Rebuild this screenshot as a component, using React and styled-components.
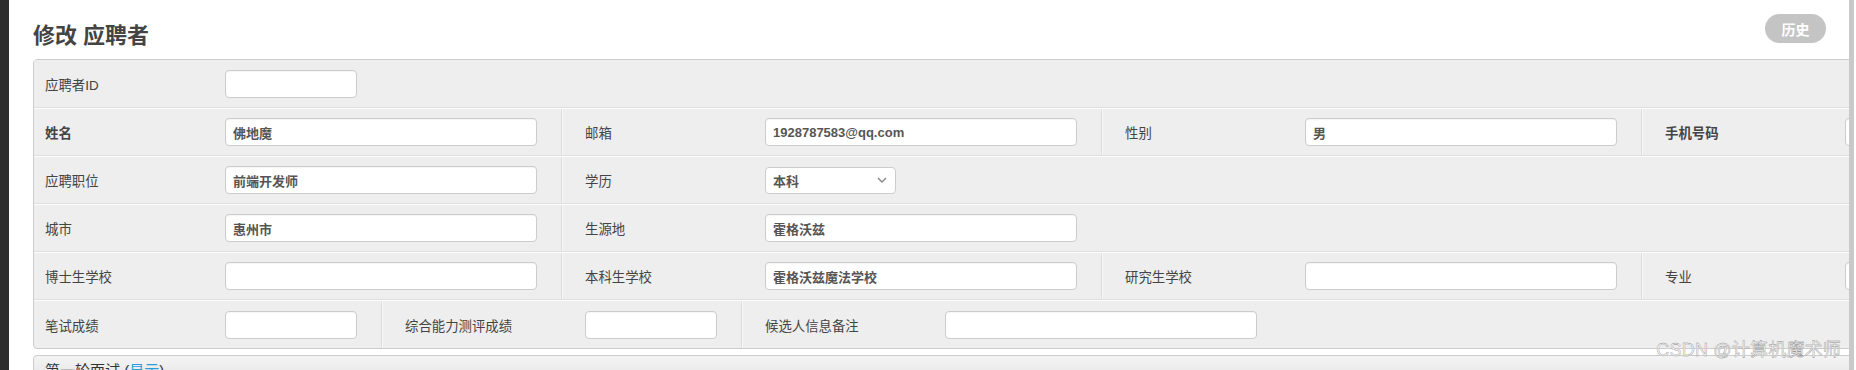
import styled, { createGlobalStyle } from "styled-components";

const GlobalStyle = createGlobalStyle`
  html, body {
    margin: 0;
    padding: 0;
    background: #fff;
  }
  body {
    font-family: "Liberation Sans", "Noto Sans CJK SC", sans-serif;
  }
`;

const Page = styled.div`
  position: relative;
  display: flex;
  height: 370px;
  overflow: hidden;
  background: #fff;
`;

const Sidebar = styled.div`
  width: 9px;
  flex-shrink: 0;
  background: #2e2e2e;
`;

const Main = styled.main`
  flex: 1;
  min-width: 0;
  overflow: hidden;
  padding-left: 24px;
`;

const EdgeBar = styled.div`
  width: 5px;
  flex-shrink: 0;
  margin-right: 2px;
  background: #c9c9c9;
`;

const Header = styled.div`
  display: flex;
  justify-content: space-between;
  align-items: flex-start;
  height: 59px;
  padding-right: 23px;
  box-sizing: border-box;
`;

const Title = styled.h1`
  margin: 0;
  padding-top: 21px;
  font-size: 22px;
  line-height: 30px;
  font-weight: 700;
  color: #444;
`;

const HistoryButton = styled.button`
  margin-top: 14px;
  width: 61px;
  height: 29px;
  padding: 0;
  border: none;
  border-radius: 15px;
  background: #c4c4c4;
  color: #fff;
  font-family: inherit;
  font-size: 14px;
  font-weight: 700;
`;

const Panel = styled.div`
  width: 2160px;
  border: 1px solid #ccc;
  border-radius: 4px;
  background: #eee;
`;

const Row = styled.div`
  display: flex;
  height: 48px;
  box-sizing: border-box;
  border-top: 1px solid #fff;
  border-bottom: 1px solid #ddd;

  &:first-child {
    border-top-color: #eee;
  }
  &:last-child {
    border-bottom: none;
  }
`;

const Group = styled.div`
  display: flex;
  align-items: center;
  padding: 0 24px 0 23px;
  border-left: 1px solid #ddd;
  box-shadow: inset 1px 0 0 #f7f7f7;

  &:first-child {
    padding-left: 11px;
    border-left: none;
    box-shadow: none;
  }
`;

const Label = styled.span`
  width: 180px;
  flex-shrink: 0;
  font-size: 13.4px;
  color: #444;
  font-weight: ${(p) => (p.$bold ? 700 : 400)};
`;

const Field = styled.input`
  width: ${(p) => (p.$wide ? 312 : 132)}px;
  height: 28px;
  box-sizing: border-box;
  padding: 0 7px;
  border: 1px solid #ccc;
  border-radius: 4px;
  background: #fff;
  box-shadow: inset 0 1px 1px rgba(0, 0, 0, 0.04);
  font-family: inherit;
  font-size: 13px;
  font-weight: 700;
  color: #555;
  outline: none;
`;

const Select = styled.div`
  display: flex;
  align-items: center;
  justify-content: space-between;
  width: 131px;
  height: 27px;
  box-sizing: border-box;
  padding: 0 8px 0 7px;
  border: 1px solid #ccc;
  border-radius: 4px;
  background: #fff;
  font-size: 13px;
  font-weight: 700;
  color: #555;
`;

const SubPanel = styled.div`
  width: 2160px;
  margin-top: 6px;
  border: 1px solid #ccc;
  border-radius: 4px 4px 0 0;
  background: linear-gradient(#f4f4f4, #e4e4e4);
  padding: 3px 11px;
  font-size: 15px;
  color: #333;
`;

const Link = styled.span`
  color: #2a9fd6;
`;

const Watermark = styled.div`
  position: absolute;
  right: 15px;
  bottom: 9px;
  font-size: 18px;
  color: #f4f4f4;
  -webkit-text-stroke: 0.35px #8a8a8a;
  letter-spacing: 0.2px;
`;

const Chevron = () => (
  <svg width="10" height="6" viewBox="0 0 10 6">
    <path d="M1 1l4 4 4-4" fill="none" stroke="#888" strokeWidth="1.4" />
  </svg>
);

const Item = ({ label, bold, value, wide }) => (
  <Group>
    <Label $bold={bold}>{label}</Label>
    <Field $wide={wide} defaultValue={value} />
  </Group>
);

export default function App() {
  return (
    <>
      <GlobalStyle />
      <Page>
        <Sidebar />
        <Main>
          <Header>
            <Title>修改 应聘者</Title>
            <HistoryButton>历史</HistoryButton>
          </Header>
          <Panel>
            <Row>
              <Item label="应聘者ID" />
            </Row>
            <Row>
              <Item label="姓名" bold wide value="佛地魔" />
              <Item label="邮箱" wide value="1928787583@qq.com" />
              <Item label="性别" wide value="男" />
              <Item label="手机号码" bold wide />
            </Row>
            <Row>
              <Item label="应聘职位" wide value="前端开发师" />
              <Group>
                <Label>学历</Label>
                <Select>
                  本科
                  <Chevron />
                </Select>
              </Group>
            </Row>
            <Row>
              <Item label="城市" wide value="惠州市" />
              <Item label="生源地" wide value="霍格沃兹" />
            </Row>
            <Row>
              <Item label="博士生学校" wide />
              <Item label="本科生学校" wide value="霍格沃兹魔法学校" />
              <Item label="研究生学校" wide />
              <Item label="专业" wide />
            </Row>
            <Row>
              <Item label="笔试成绩" />
              <Item label="综合能力测评成绩" />
              <Item label="候选人信息备注" wide />
            </Row>
          </Panel>
          <SubPanel>
            第一轮面试 (<Link>显示</Link>)
          </SubPanel>
        </Main>
        <EdgeBar />
        <Watermark>CSDN @计算机魔术师</Watermark>
      </Page>
    </>
  );
}
